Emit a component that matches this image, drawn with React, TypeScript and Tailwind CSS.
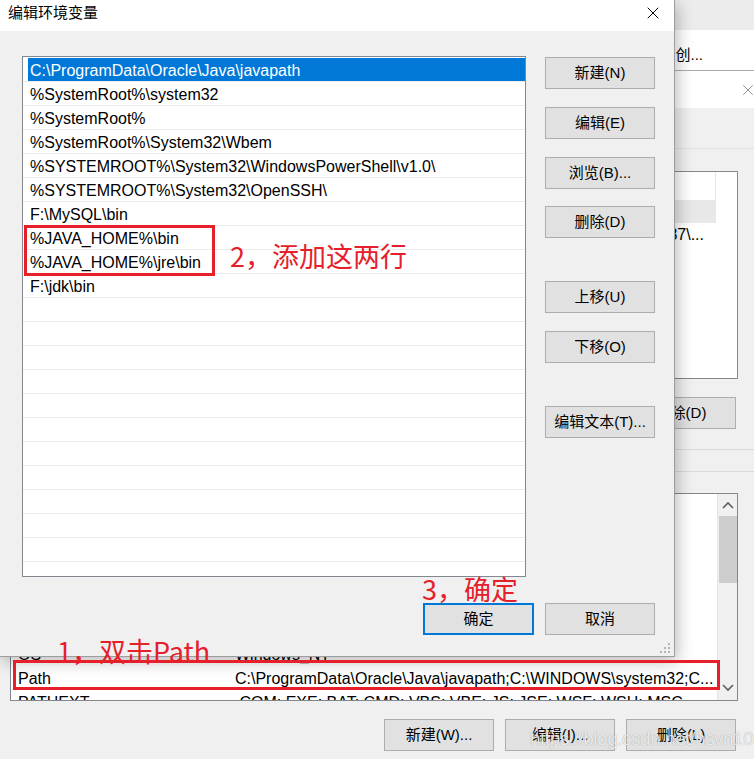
import { X } from "lucide-react";

const pathRows = [
  "C:\\ProgramData\\Oracle\\Java\\javapath",
  "%SystemRoot%\\system32",
  "%SystemRoot%",
  "%SystemRoot%\\System32\\Wbem",
  "%SYSTEMROOT%\\System32\\WindowsPowerShell\\v1.0\\",
  "%SYSTEMROOT%\\System32\\OpenSSH\\",
  "F:\\MySQL\\bin",
  "%JAVA_HOME%\\bin",
  "%JAVA_HOME%\\jre\\bin",
  "F:\\jdk\\bin",
  "", "", "", "", "", "", "", "", "", "", "", "",
];

const sysRows = [
  ["CLASSPATH", ".;%JAVA_HOME%\\lib;%JAVA_HOME%\\lib\\tools.jar"],
  ["ComSpec", "C:\\WINDOWS\\system32\\cmd.exe"],
  ["DriverData", "C:\\Windows\\System32\\Drivers\\DriverData"],
  ["JAVA_HOME", "F:\\jdk"],
  ["NUMBER_OF_PROCESSORS", "8"],
  ["OS", "Windows_NT"],
  ["Path", "C:\\ProgramData\\Oracle\\Java\\javapath;C:\\WINDOWS\\system32;C..."],
  ["PATHEXT", ".COM;.EXE;.BAT;.CMD;.VBS;.VBE;.JS;.JSE;.WSF;.WSH;.MSC"],
];

function WinButton({
  label,
  className = "",
}: {
  label: string;
  className?: string;
}) {
  return (
    <div
      className={`flex h-[32px] w-[110px] items-center justify-center border border-[#adadad] bg-[#e1e1e1] text-[15px] text-black ${className}`}
    >
      {label}
    </div>
  );
}

function Chevron({ up }: { up?: boolean }) {
  return (
    <svg width="12" height="8" viewBox="0 0 12 8">
      <path
        d={up ? "M1 7 L6 2 L11 7" : "M1 1 L6 6 L11 1"}
        fill="none"
        stroke="#606060"
        strokeWidth="1.6"
      />
    </svg>
  );
}

function BackgroundWindows() {
  return (
    <div className="flex w-[771px] flex-col">
      {/* window further behind */}
      <div className="h-[30px] bg-[#ececec]" />
      <div className="flex h-[41px] items-center justify-end border-b border-[#acacac] bg-white pr-[68px] pt-[10px] text-[15px]">
        另存为 / 创...
      </div>

      {/* 环境变量 window */}
      <div className="flex h-[37px] items-center justify-end bg-white">
        <div className="flex w-[46px] justify-center">
          <X className="h-[18px] w-[18px] text-[#8a8a8a]" strokeWidth={1.2} />
        </div>
      </div>
      <div className="flex flex-col bg-[#f0f0f0]">
        <div className="h-[41px] border-b border-[#e2e2e2]" />
        <div className="h-[22px]" />

        {/* user variables list */}
        <div className="ml-[10px] flex h-[208px] w-[728px] flex-col border border-[#828790] bg-white">
          <div className="flex h-[28px]">
            <div className="w-[705px] border-r border-[#e5e5e5]" />
          </div>
          <div className="h-[23px] w-[705px] bg-[#e8e8e8]" />
          <div className="flex h-[24px] w-[693px] items-center justify-end whitespace-nowrap text-[16px]">
            C:\Users\Administrator\AppData\Local\Programs\Python\Python 37\...
          </div>
        </div>

        <div className="mt-[18px] flex gap-[11px] pl-[384px]">
          <WinButton label="新建(N)..." />
          <WinButton label="编辑(E)..." />
          <WinButton label="删除(D)" />
        </div>

        <div className="mt-[20px] h-[23px] border-y border-[#dadada]" />
        <div className="h-[21px]" />

        {/* system variables list */}
        <div className="ml-[10px] flex h-[208px] w-[728px] overflow-hidden border border-[#828790] bg-white">
          <div className="flex flex-1 flex-col overflow-hidden">
            <div className="h-[28px] shrink-0" />
            {sysRows.map(([name, value]) => (
              <div
                key={name}
                className="flex h-[24px] shrink-0 items-center whitespace-nowrap pt-[1px] text-[16px]"
              >
                <span className="w-[224px] shrink-0 pl-[7px]">{name}</span>
                <span>{value}</span>
              </div>
            ))}
          </div>
          <div className="flex w-[20px] flex-col items-center border-l border-[#e6e6e6] bg-[#f0f0f0]">
            <div className="flex h-[22px] items-center">
              <Chevron up />
            </div>
            <div className="h-[67px] w-[18px] bg-[#cdcdcd]" />
            <div className="flex-1" />
            <div className="flex h-[24px] items-center">
              <Chevron />
            </div>
          </div>
        </div>

        <div className="mt-[18px] flex gap-[11px] pl-[384px]">
          <WinButton label="新建(W)..." />
          <WinButton label="编辑(I)..." />
          <WinButton label="删除(L)" />
        </div>
        <div className="h-[20px]" />
      </div>
    </div>
  );
}

function EditDialog() {
  return (
    <div className="absolute left-0 top-0 flex h-[657px] w-[675px] flex-col border-b border-r border-[#9d9d9d] bg-[#f0f0f0] shadow-[2px_4px_16px_rgba(0,0,0,0.28)]">
      <div className="flex h-[31px] shrink-0 items-center justify-between bg-white pb-[5px]">
        <span className="pl-[8px] text-[15px]">编辑环境变量</span>
        <div className="flex w-[42px] justify-center">
          <X className="h-[20px] w-[20px] text-black" strokeWidth={1.2} />
        </div>
      </div>

      <div className="flex pl-[22px] pt-[25px]">
        <div className="flex h-[521px] w-[504px] flex-col overflow-hidden border border-[#828790] bg-white pt-[1px]">
          {pathRows.map((row, i) => (
            <div
              key={i}
              className="flex h-[24px] shrink-0 border-b border-[#ebebeb] pl-[5px]"
            >
              <div
                className={`flex flex-1 items-center whitespace-nowrap pl-[2px] pt-[3px] text-[16px] ${
                  i === 0 ? "bg-[#0078d7] text-white" : "text-black"
                }`}
              >
                {row}
              </div>
            </div>
          ))}
        </div>

        <div className="ml-[19px] flex flex-col pt-[1px]">
          <WinButton label="新建(N)" />
          <WinButton label="编辑(E)" className="mt-[18px]" />
          <WinButton label="浏览(B)..." className="mt-[18px]" />
          <WinButton label="删除(D)" className="mt-[17px]" />
          <WinButton label="上移(U)" className="mt-[43px]" />
          <WinButton label="下移(O)" className="mt-[18px]" />
          <WinButton label="编辑文本(T)..." className="mt-[43px]" />
        </div>
      </div>

      <div className="mt-[26px] flex gap-[11px] pl-[423px]">
        <div className="flex h-[32px] w-[111px] items-center justify-center border-2 border-[#0078d7] bg-[#e1e1e1] text-[15px]">
          确定
        </div>
        <WinButton label="取消" />
      </div>

      <svg
        className="absolute bottom-[3px] right-[4px]"
        width="10"
        height="10"
        viewBox="0 0 10 10"
      >
        <g fill="#b5b5b5">
          <rect x="8" y="0" width="2" height="2" />
          <rect x="4" y="4" width="2" height="2" />
          <rect x="8" y="4" width="2" height="2" />
          <rect x="0" y="8" width="2" height="2" />
          <rect x="4" y="8" width="2" height="2" />
          <rect x="8" y="8" width="2" height="2" />
        </g>
      </svg>
    </div>
  );
}

export default function App() {
  return (
    <div className="relative h-[759px] w-[754px] overflow-hidden bg-[#f0f0f0] font-['Liberation_Sans','Noto_Sans_CJK_SC',sans-serif] text-black">
      <BackgroundWindows />
      <EditDialog />

      {/* annotations */}
      <div className="absolute left-[24px] top-[225px] h-[51px] w-[191px] border-[3px] border-[#e5202a]" />
      <div className="absolute left-[230px] top-[238px] font-['Noto_Sans_CJK_SC',sans-serif] text-[27px] leading-[36px] text-[#e5202a]">
        2，添加这两行
      </div>
      <div className="absolute left-[422px] top-[571px] font-['Noto_Sans_CJK_SC',sans-serif] text-[27px] leading-[36px] text-[#e5202a]">
        3，确定
      </div>
      <div className="absolute left-[57px] top-[633px] font-['Noto_Sans_CJK_SC',sans-serif] text-[27px] leading-[36px] text-[#e5202a]">
        1，双击Path
      </div>
      <div className="absolute left-[13px] top-[660px] h-[30px] w-[707px] border-[3px] border-[#e5202a]" />

      <div className="absolute left-[530px] top-[725px] text-[19px] tracking-tight text-white/80 [text-shadow:0_0_1px_rgba(0,0,0,0.4)]">
        https://blog.csdn.net/hsvn1024
      </div>
    </div>
  );
}
